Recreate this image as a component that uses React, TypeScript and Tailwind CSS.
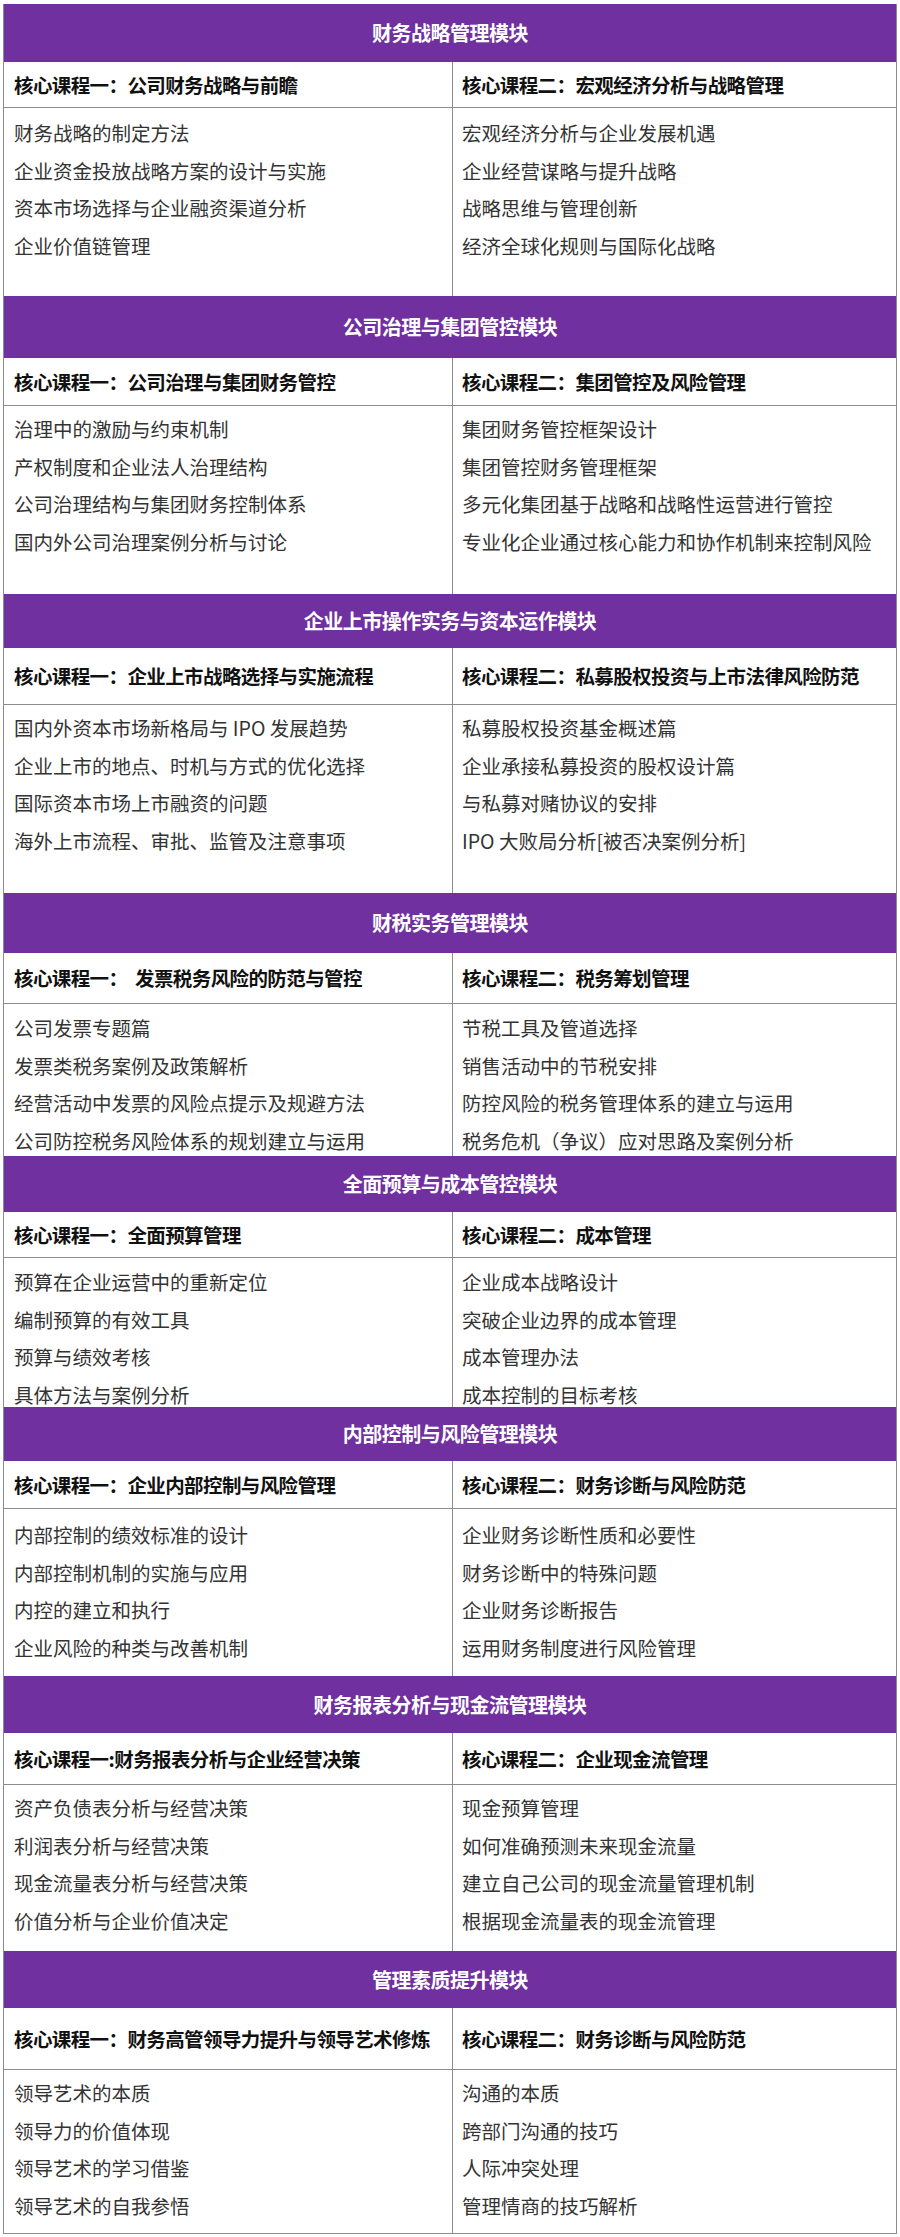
import React from "react";

type Section = {
  title: string;
  left: string;
  right: string;
  leftItems: string[];
  rightItems: string[];
  head: string;
  row: string;
  body: string;
  pad: string;
};

const sections: Section[] = [
  {
    title: "财务战略管理模块",
    left: "核心课程一：公司财务战略与前瞻",
    right: "核心课程二：宏观经济分析与战略管理",
    leftItems: ["财务战略的制定方法", "企业资金投放战略方案的设计与实施", "资本市场选择与企业融资渠道分析", "企业价值链管理"],
    rightItems: ["宏观经济分析与企业发展机遇", "企业经营谋略与提升战略", "战略思维与管理创新", "经济全球化规则与国际化战略"],
    head: "h-[58px]",
    row: "h-[46px]",
    body: "h-[188px]",
    pad: "pt-[6px]",
  },
  {
    title: "公司治理与集团管控模块",
    left: "核心课程一：公司治理与集团财务管控",
    right: "核心课程二：集团管控及风险管理",
    leftItems: ["治理中的激励与约束机制", "产权制度和企业法人治理结构", "公司治理结构与集团财务控制体系", "国内外公司治理案例分析与讨论"],
    rightItems: ["集团财务管控框架设计", "集团管控财务管理框架", "多元化集团基于战略和战略性运营进行管控", "专业化企业通过核心能力和协作机制来控制风险"],
    head: "h-[62px]",
    row: "h-[48px]",
    body: "h-[188px]",
    pad: "pt-[4px]",
  },
  {
    title: "企业上市操作实务与资本运作模块",
    left: "核心课程一：企业上市战略选择与实施流程",
    right: "核心课程二：私募股权投资与上市法律风险防范",
    leftItems: ["国内外资本市场新格局与 IPO 发展趋势", "企业上市的地点、时机与方式的优化选择", "国际资本市场上市融资的问题", "海外上市流程、审批、监管及注意事项"],
    rightItems: ["私募股权投资基金概述篇", "企业承接私募投资的股权设计篇", "与私募对赌协议的安排", "IPO 大败局分析[被否决案例分析]"],
    head: "h-[54px]",
    row: "h-[57px]",
    body: "h-[188px]",
    pad: "pt-[4px]",
  },
  {
    title: "财税实务管理模块",
    left: "核心课程一：  发票税务风险的防范与管控",
    right: "核心课程二：税务筹划管理",
    leftItems: ["公司发票专题篇", "发票类税务案例及政策解析", "经营活动中发票的风险点提示及规避方法", "公司防控税务风险体系的规划建立与运用"],
    rightItems: ["节税工具及管道选择", "销售活动中的节税安排", "防控风险的税务管理体系的建立与运用", "税务危机（争议）应对思路及案例分析"],
    head: "h-[60px]",
    row: "h-[51px]",
    body: "h-[152px]",
    pad: "pt-[5px]",
  },
  {
    title: "全面预算与成本管控模块",
    left: "核心课程一：全面预算管理",
    right: "核心课程二：成本管理",
    leftItems: ["预算在企业运营中的重新定位", "编制预算的有效工具", "预算与绩效考核", "具体方法与案例分析"],
    rightItems: ["企业成本战略设计", "突破企业边界的成本管理", "成本管理办法", "成本控制的目标考核"],
    head: "h-[56px]",
    row: "h-[46px]",
    body: "h-[149px]",
    pad: "pt-[5px]",
  },
  {
    title: "内部控制与风险管理模块",
    left: "核心课程一：企业内部控制与风险管理",
    right: "核心课程二：财务诊断与风险防范",
    leftItems: ["内部控制的绩效标准的设计", "内部控制机制的实施与应用", "内控的建立和执行", "企业风险的种类与改善机制"],
    rightItems: ["企业财务诊断性质和必要性", "财务诊断中的特殊问题", "企业财务诊断报告", "运用财务制度进行风险管理"],
    head: "h-[54px]",
    row: "h-[48px]",
    body: "h-[167px]",
    pad: "pt-[7px]",
  },
  {
    title: "财务报表分析与现金流管理模块",
    left: "核心课程一:财务报表分析与企业经营决策",
    right: "核心课程二：企业现金流管理",
    leftItems: ["资产负债表分析与经营决策", "利润表分析与经营决策", "现金流量表分析与经营决策", "价值分析与企业价值决定"],
    rightItems: ["现金预算管理", "如何准确预测未来现金流量", "建立自己公司的现金流量管理机制", "根据现金流量表的现金流管理"],
    head: "h-[57px]",
    row: "h-[52px]",
    body: "h-[166px]",
    pad: "pt-[4px]",
  },
  {
    title: "管理素质提升模块",
    left: "核心课程一：财务高管领导力提升与领导艺术修炼",
    right: "核心课程二：财务诊断与风险防范",
    leftItems: ["领导艺术的本质", "领导力的价值体现", "领导艺术的学习借鉴", "领导艺术的自我参悟"],
    rightItems: ["沟通的本质", "跨部门沟通的技巧", "人际冲突处理", "管理情商的技巧解析"],
    head: "h-[57px]",
    row: "h-[62px]",
    body: "h-[163px]",
    pad: "pt-[4px]",
  },
];

function Items({ items, pad }: { items: string[]; pad: string }) {
  return (
    <div className={`flex flex-col ${pad}`}>
      {items.map((t) => (
        <div key={t} className="whitespace-pre text-[19.5px] leading-[37.5px] text-[#333333]">
          {t}
        </div>
      ))}
    </div>
  );
}

export default function App() {
  return (
    <div
      className="w-[900px] bg-white pt-[4px] pb-[4px]"
      style={{ fontFamily: '"Noto Sans CJK SC", "Noto Sans", sans-serif' }}
    >
      <div className="mx-[3px] border-x border-b border-[#8c8c8c]">
        {sections.map((s) => (
          <div key={s.title}>
            <div className={`flex items-center justify-center bg-[#7030a0] ${s.head}`}>
              <span className="text-[20px] font-bold tracking-[-0.5px] text-white">{s.title}</span>
            </div>
            <div className="grid grid-cols-[449px_1fr]">
              <div className={`flex items-center whitespace-pre border-r border-b border-[#8c8c8c] pl-[10px] ${s.row}`}>
                <span className="text-[19.5px] font-bold tracking-[-0.6px] text-[#111111]">{s.left}</span>
              </div>
              <div className={`flex items-center whitespace-pre border-b border-[#8c8c8c] pl-[9px] ${s.row}`}>
                <span className="text-[19.5px] font-bold tracking-[-0.6px] text-[#111111]">{s.right}</span>
              </div>
              <div className={`border-r border-[#8c8c8c] pl-[10px] ${s.body}`}>
                <Items items={s.leftItems} pad={s.pad} />
              </div>
              <div className={`pl-[9px] ${s.body}`}>
                <Items items={s.rightItems} pad={s.pad} />
              </div>
            </div>
          </div>
        ))}
      </div>
    </div>
  );
}
